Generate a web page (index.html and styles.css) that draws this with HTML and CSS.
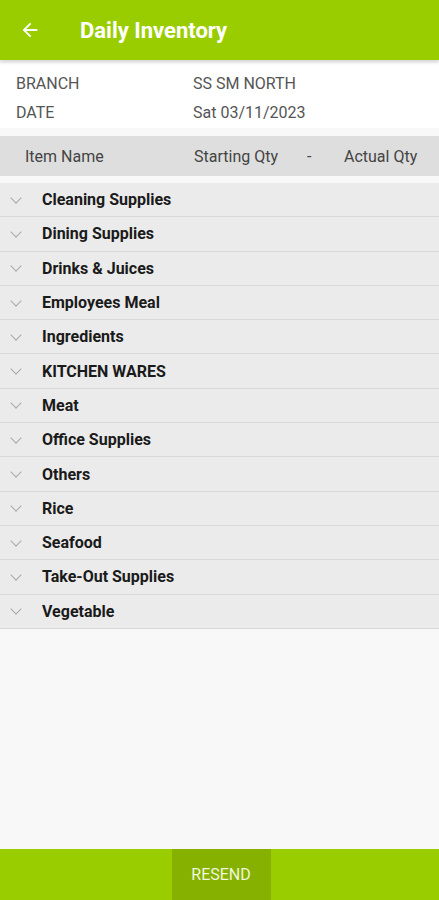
FILE: index.html
```html
<!DOCTYPE html>
<html>
<head>
<meta charset="utf-8">
<title>Daily Inventory</title>
<link rel="stylesheet" href="styles.css">
</head>
<body>
<div class="app">
  <div class="topbar">
    <svg class="back" width="22" height="22" viewBox="0 0 24 24"><path d="M20 11H7.83l5.59-5.59L12 4l-8 8 8 8 1.41-1.41L7.83 13H20v-2z" fill="#fff"/></svg>
    <span class="title">Daily Inventory</span>
  </div>

  <div class="info">
    <div class="inforow"><span class="lbl">BRANCH</span><span>SS SM NORTH</span></div>
    <div class="inforow"><span class="lbl">DATE</span><span>Sat 03/11/2023</span></div>
  </div>

  <div class="colhead">
    <span class="c1">Item Name</span>
    <span class="c2">Starting Qty</span>
    <span class="c3">-</span>
    <span class="c4">Actual Qty</span>
  </div>

  <div class="list">
    <div class="row"><span class="chev"></span>Cleaning Supplies</div>
    <div class="row"><span class="chev"></span>Dining Supplies</div>
    <div class="row"><span class="chev"></span>Drinks &amp; Juices</div>
    <div class="row"><span class="chev"></span>Employees Meal</div>
    <div class="row"><span class="chev"></span>Ingredients</div>
    <div class="row"><span class="chev"></span>KITCHEN WARES</div>
    <div class="row"><span class="chev"></span>Meat</div>
    <div class="row"><span class="chev"></span>Office Supplies</div>
    <div class="row"><span class="chev"></span>Others</div>
    <div class="row"><span class="chev"></span>Rice</div>
    <div class="row"><span class="chev"></span>Seafood</div>
    <div class="row"><span class="chev"></span>Take-Out Supplies</div>
    <div class="row"><span class="chev"></span>Vegetable</div>
  </div>

  <div class="bottombar">
    <div class="resend">RESEND</div>
  </div>
</div>
</body>
</html>
```

FILE: styles.css
```css
html, body {
  margin: 0;
  padding: 0;
}

body {
  font-family: Roboto, "Liberation Sans", sans-serif;
  background: #f8f8f8;
}

.app {
  width: 439px;
  height: 900px;
  display: flex;
  flex-direction: column;
}

.topbar {
  height: 60px;
  flex-shrink: 0;
  background: #9acd00;
  display: flex;
  align-items: center;
  box-shadow: 0 2px 4px rgba(0,0,0,0.15);
  position: relative;
  z-index: 1;
}

.back {
  margin-left: 19px;
  margin-right: 39px;
}

.title {
  color: #fff;
  font-size: 22px;
  font-weight: 700;
}

.info {
  background: #fff;
  padding: 6px 0 1px 16px;
  margin-top: 3px;
  color: #555;
  font-size: 16px;
}

.inforow {
  display: flex;
  height: 29px;
  align-items: center;
}

.lbl {
  width: 177px;
}

.colhead {
  margin-top: 8px;
  height: 40px;
  flex-shrink: 0;
  background: #dedede;
  display: flex;
  align-items: center;
  font-size: 16px;
  color: #444;
}

.c1 { margin-left: 25px; width: 169px; }
.c2 { width: 113px; }
.c3 { width: 37px; }

.list {
  margin-top: 7px;
}

.row {
  height: 33.3px;
  background: #ebebeb;
  border-bottom: 1px solid #d8d8d8;
  display: flex;
  align-items: center;
  font-size: 16px;
  font-weight: 700;
  color: #1a1a1a;
}

.chev {
  width: 7px;
  height: 7px;
  border-right: 1.2px solid #aaa;
  border-bottom: 1.2px solid #aaa;
  transform: rotate(45deg);
  margin: -4px 22px 0 12px;
}

.bottombar {
  margin-top: auto;
  height: 51px;
  flex-shrink: 0;
  background: #9acd00;
  display: flex;
  justify-content: center;
}

.resend {
  width: 99px;
  margin-left: 3px;
  background: #87b100;
  color: #eef6dc;
  font-size: 16px;
  display: flex;
  align-items: center;
  justify-content: center;
}
```
